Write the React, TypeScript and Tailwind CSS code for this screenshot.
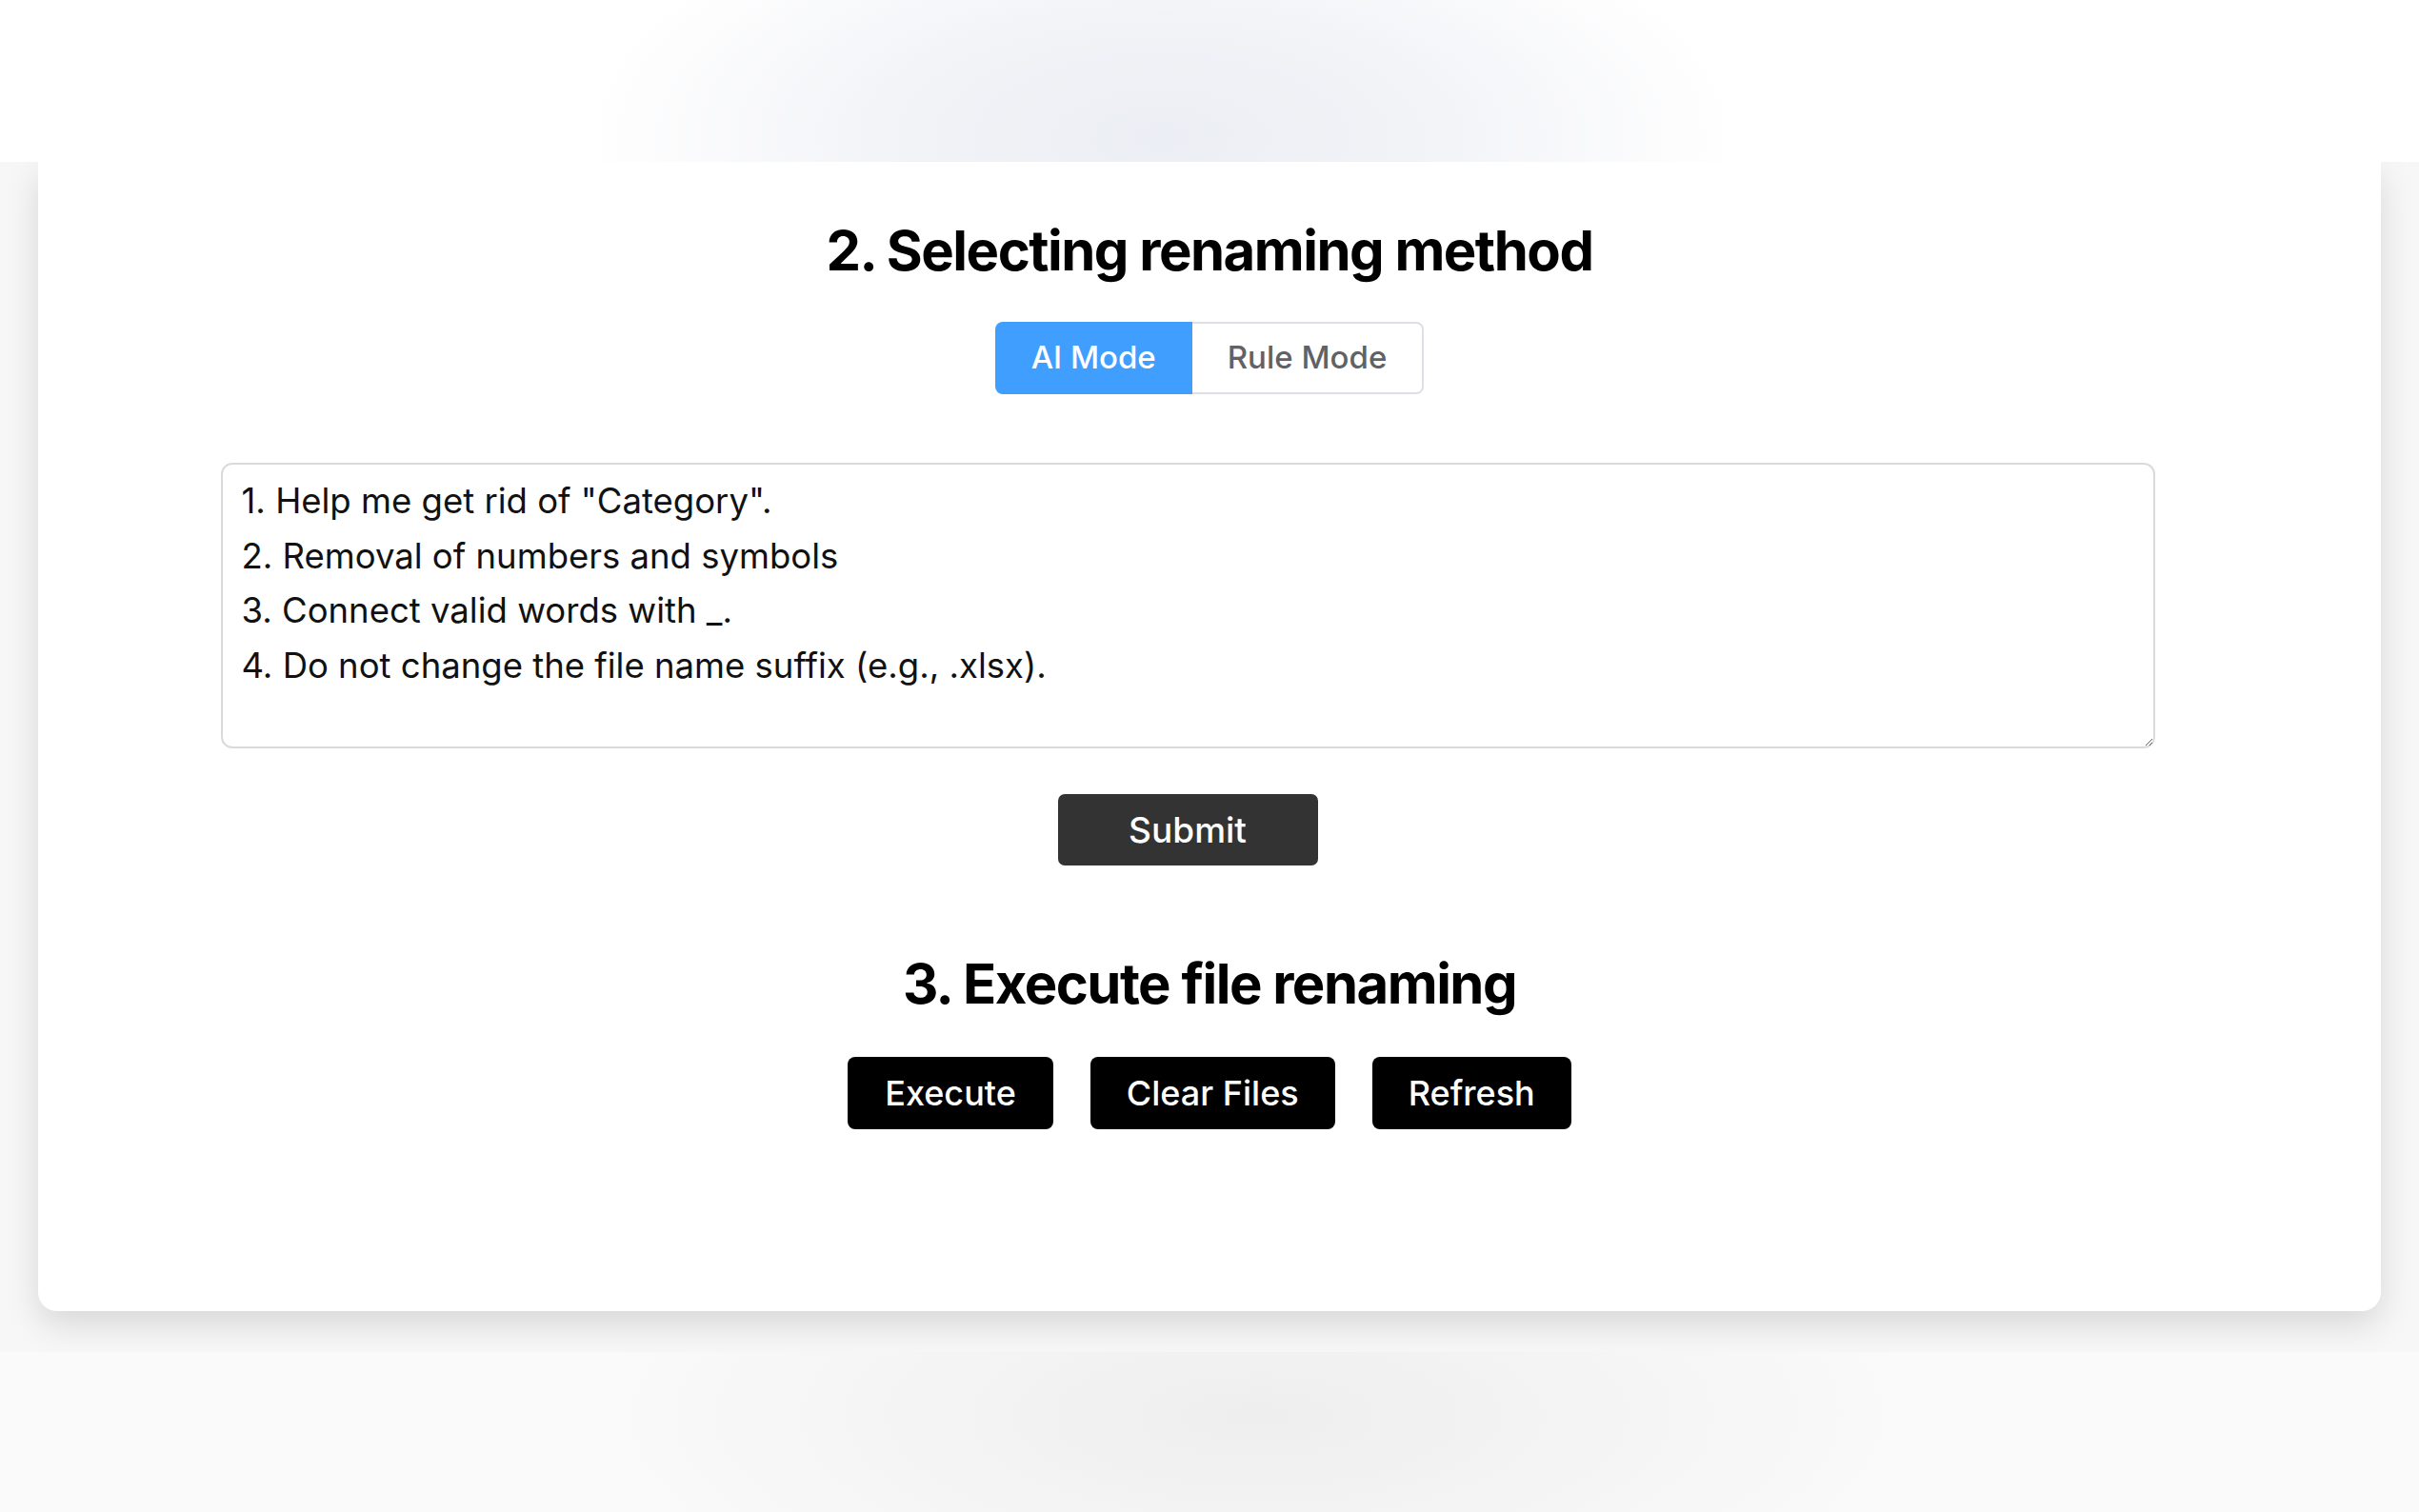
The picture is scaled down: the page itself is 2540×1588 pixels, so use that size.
import React from "react";

const ruleText = `1. Help me get rid of "Category".
2. Removal of numbers and symbols
3. Connect valid words with _.
4. Do not change the file name suffix (e.g., .xlsx).`;

export default function App() {
  return (
    <div className="relative flex h-[1588px] w-[2540px] flex-col overflow-hidden bg-[#f7f7f7] font-[Inter,'Noto_Sans',sans-serif] text-black">
      {/* top band */}
      <div className="relative z-10 h-[170px] w-full bg-[radial-gradient(ellipse_24%_160%_at_48%_85%,#ebeef4_0%,#f2f3f7_45%,#ffffff_100%)]" />

      {/* card */}
      <div className="mx-[40px] flex h-[1207px] flex-col items-center rounded-b-[20px] bg-white shadow-[0_14px_36px_rgba(0,0,0,0.13)]">
        <h2 className="mt-[57px] h-[72px] text-[58px] font-bold leading-[72px] tracking-[-1.5px]">
          2. Selecting renaming method
        </h2>

        <div className="mt-[39px] flex h-[76px]">
          <button className="h-full rounded-l-[8px] bg-[#409eff] px-[38px] text-[33px] font-medium text-white">
            AI Mode
          </button>
          <button className="h-full rounded-r-[8px] border-2 border-l-0 border-[#dcdfe6] bg-white px-[37px] text-[33px] font-medium text-[#606266]">
            Rule Mode
          </button>
        </div>

        <div className="mr-[46px] mt-[72px] flex w-[2031px] flex-col items-center">
          <textarea
            defaultValue={ruleText}
            className="h-[300px] w-full resize-y rounded-[12px] border-2 border-[#dadada] px-[20px] py-[10px] text-[36.5px] leading-[57.5px] text-[#111] outline-none"
          />
          <button className="mt-[48px] h-[75px] w-[273px] rounded-[7px] bg-[#333333] text-[37px] font-medium text-white">
            Submit
          </button>
        </div>

        <h2 className="mt-[88px] h-[72px] text-[58px] font-bold leading-[72px] tracking-[-1.5px]">
          3. Execute file renaming
        </h2>

        <div className="mt-[41px] flex h-[76px] gap-[39px]">
          <button className="h-full rounded-[8px] bg-black px-[39px] text-[36px] font-medium text-white">
            Execute
          </button>
          <button className="h-full rounded-[8px] bg-black px-[38px] text-[36px] font-medium text-white">
            Clear Files
          </button>
          <button className="h-full rounded-[8px] bg-black px-[38px] text-[36px] font-medium text-white">
            Refresh
          </button>
        </div>
      </div>

      {/* bottom band */}
      <div className="relative z-10 mt-[43px] w-full flex-1 bg-[radial-gradient(ellipse_28%_150%_at_52%_40%,#eeeeee_0%,#f4f4f4_50%,#fafafa_100%)]" />
    </div>
  );
}
